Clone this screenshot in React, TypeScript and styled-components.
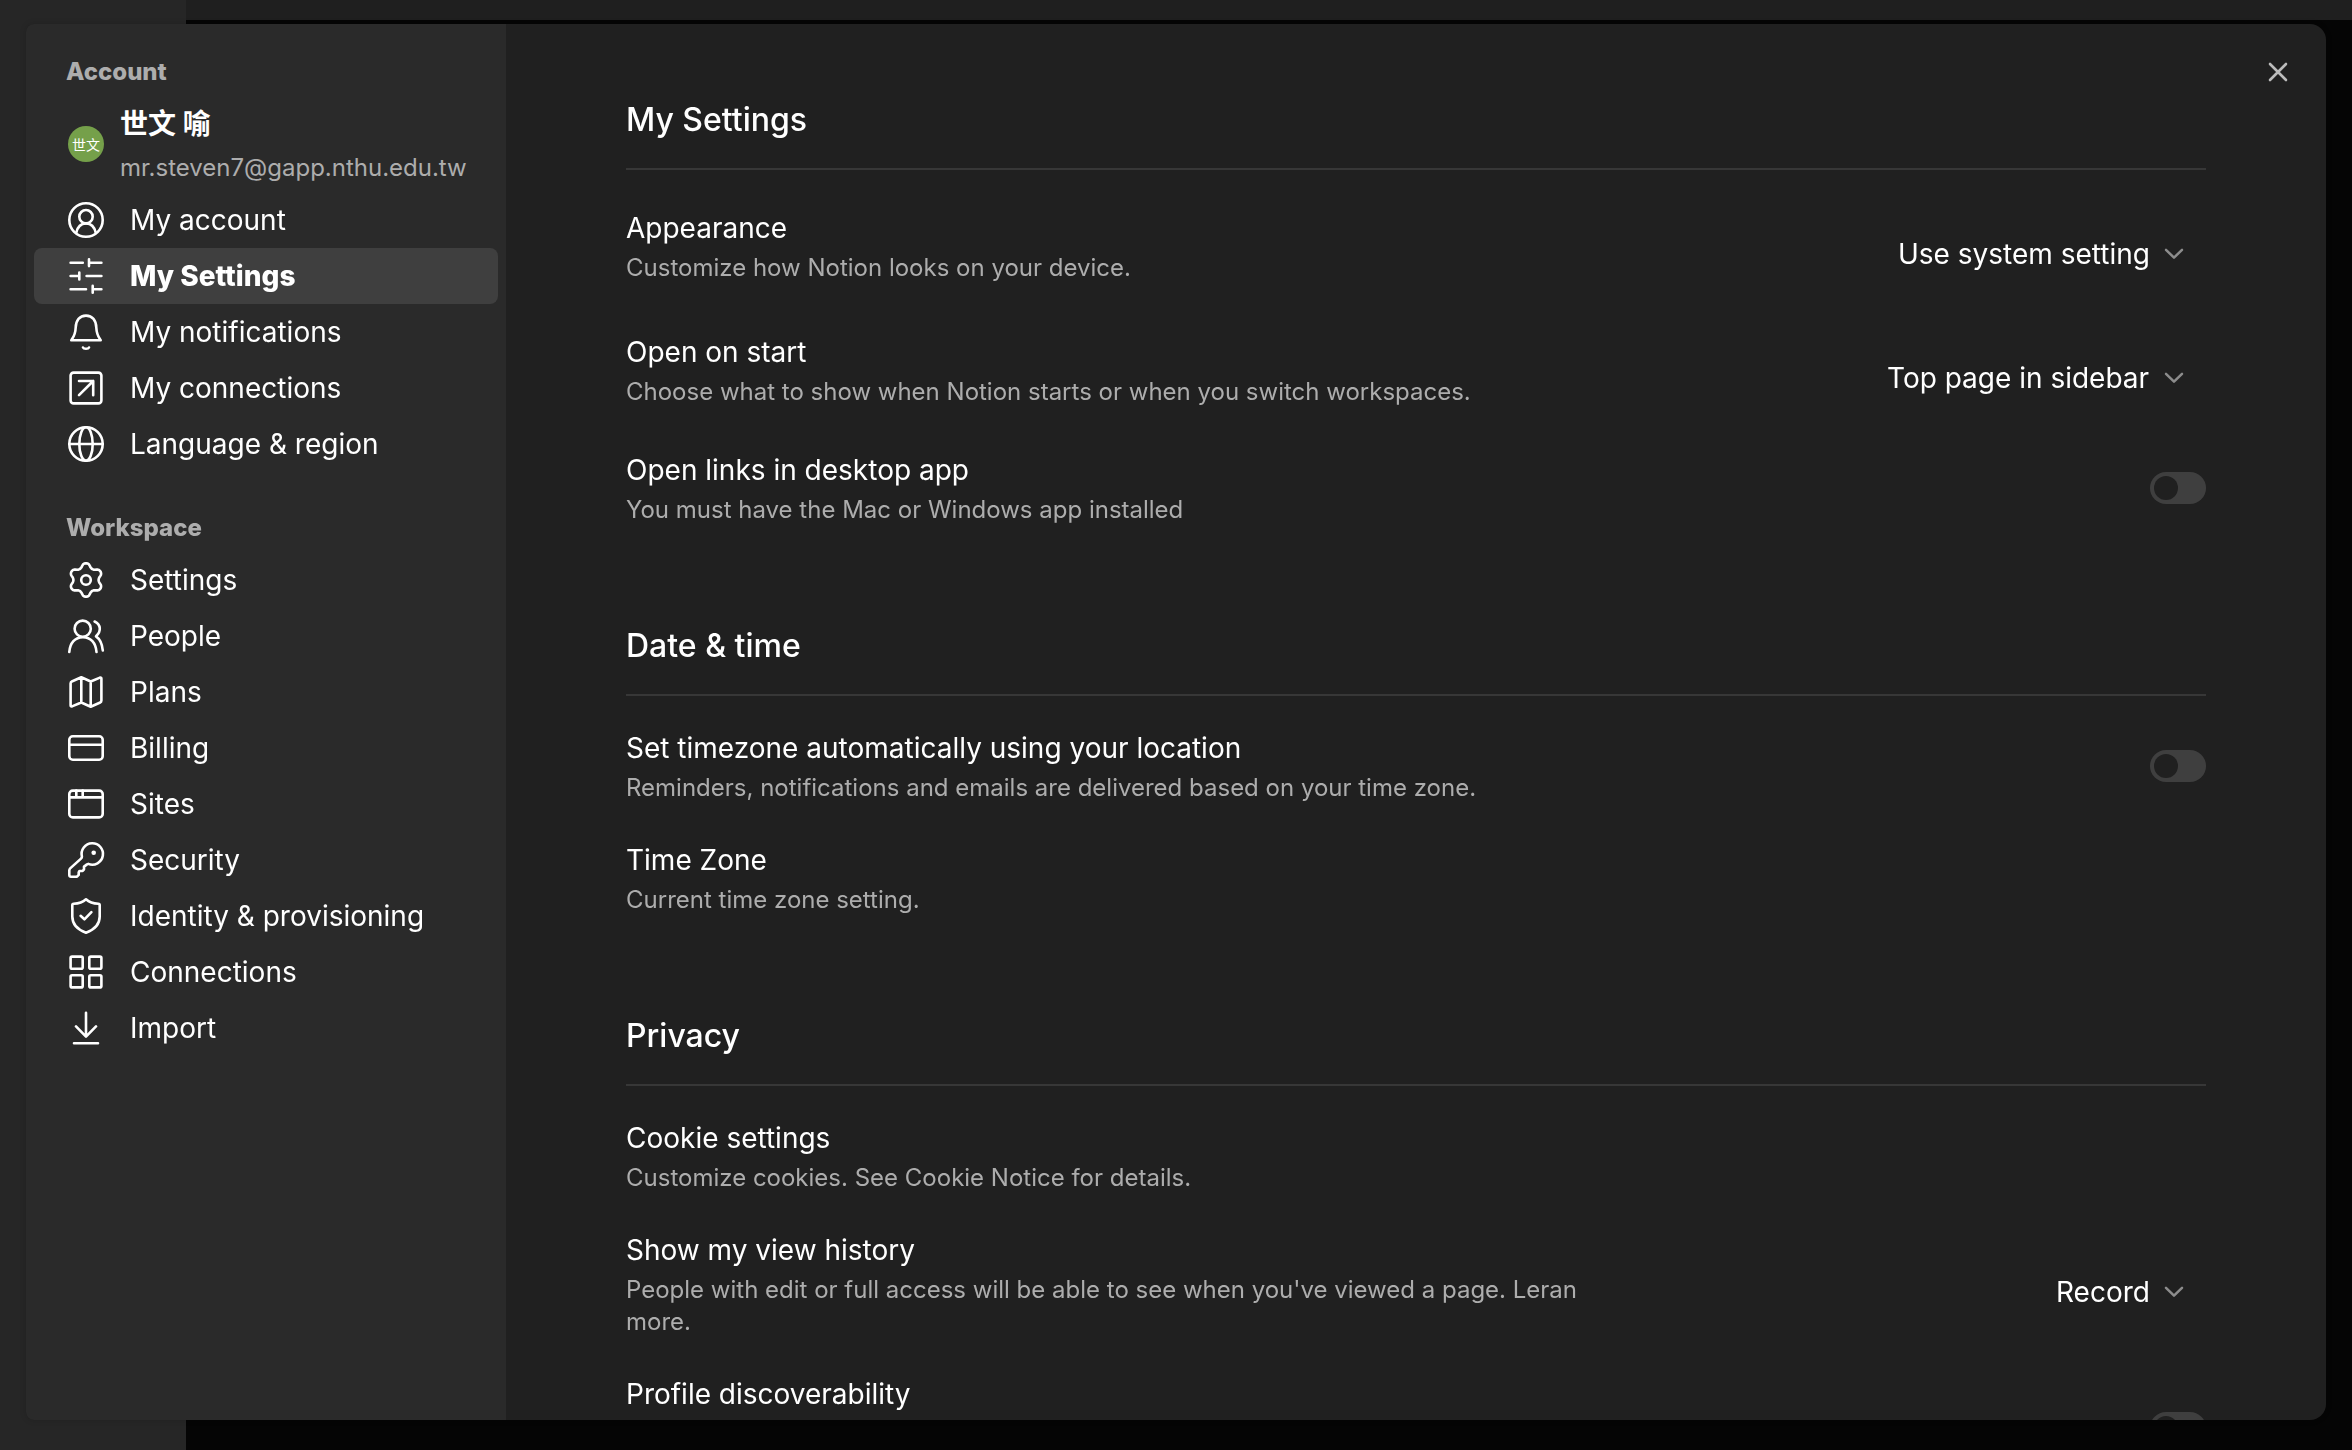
import React, { useId, useState } from "react";
import styled, { createGlobalStyle, css } from "styled-components";

const color = {
  text: "#ffffff",
  muted: "#adadad",
  sidebar: "#2a2a2a",
  panel: "#202020",
  active: "#3f3f3f",
  line: "#373737",
};

const GlobalStyle = createGlobalStyle`
  * { box-sizing: border-box; }
  body {
    margin: 0;
    background: #050505;
    color: ${color.text};
    font-family: Inter, "Noto Sans CJK TC", sans-serif;
    font-size: 28px;
  }
  h2, h3, p, ul { margin: 0; padding: 0; }
  button, select { font: inherit; color: inherit; }
`;

/* Page behind the dialog */
const Backdrop = styled.div`
  display: grid;
  grid-template-columns: 186px 1fr;
  min-height: 100vh;
`;

const BackdropRail = styled.div`
  background: #262626;
`;

const BackdropBar = styled.div`
  height: 20px;
  background: #1f1f1f;
`;

const Dialog = styled.section`
  position: fixed;
  inset: 24px 26px 30px;
  display: flex;
  overflow: hidden;
  border-radius: 8px 16px 16px 8px;
  background: ${color.panel};
  box-shadow: 0 0 6px rgba(0, 0, 0, 0.15);
`;

/* Sidebar */
const Sidebar = styled.nav`
  flex: 0 0 480px;
  display: flex;
  flex-direction: column;
  gap: 32px;
  padding: 24px 8px;
  background: ${color.sidebar};
`;

const GroupTitle = styled.h3`
  padding: 0 32px;
  font-size: 24px;
  line-height: 48px;
  font-weight: 800;
  color: ${color.muted};
`;

const User = styled.div`
  display: flex;
  align-items: center;
  gap: 16px;
  height: 96px;
  padding-left: 34px;
`;

const UserDetails = styled.div`
  padding-top: 4px;
`;

const Avatar = styled.span`
  display: grid;
  place-items: center;
  flex: none;
  width: 36px;
  height: 36px;
  border-radius: 50%;
  background: #75a04a;
  font-size: 14px;
  font-weight: 400;
`;

const UserName = styled.p`
  line-height: 44px;
  font-weight: 700;
`;

const UserMail = styled.p`
  font-size: 24px;
  line-height: 44px;
  color: ${color.muted};
`;

const NavList = styled.ul`
  list-style: none;
`;

const NavButton = styled.button<{ $active: boolean }>`
  display: flex;
  align-items: center;
  gap: 24px;
  width: 100%;
  height: 56px;
  padding: 0 32px;
  border: 0;
  border-radius: 8px;
  background: transparent;
  text-align: left;
  white-space: nowrap;
  cursor: pointer;
  ${(p) =>
    p.$active &&
    css`
      background: ${color.active};
      font-weight: 800;
    `}
`;

const IconSvg = styled.svg`
  flex: none;
  width: 40px;
  height: 40px;
  fill: none;
  stroke: currentColor;
  stroke-width: 2.6;
  stroke-linecap: round;
  stroke-linejoin: round;
`;

/* Main column */
const Content = styled.main`
  flex: 1;
  display: flex;
  flex-direction: column;
  gap: 96px;
  overflow: hidden;
  padding: 72px 120px 0;
`;

const SectionTitle = styled.h2`
  padding-bottom: 24px;
  border-bottom: 2px solid ${color.line};
  font-size: 32px;
  line-height: 48px;
  font-weight: 500;
`;

const Rows = styled.div`
  display: flex;
  flex-direction: column;
  gap: 36px;
  padding-top: 32px;
`;

const Row = styled.div<{ $tall?: boolean }>`
  display: flex;
  align-items: center;
  justify-content: space-between;
  min-height: ${(p) => (p.$tall ? "108px" : "76px")};
`;

const RowText = styled.div<{ $top?: boolean }>`
  display: flex;
  flex-direction: column;
  gap: 4px;
  max-width: 980px;
  align-self: ${(p) => (p.$top ? "flex-start" : "center")};
`;

const RowLabel = styled.label`
  font-size: 28px;
  font-weight: 400;
  line-height: 40px;
`;

const RowNote = styled.p`
  font-size: 24px;
  line-height: 32px;
  color: ${color.muted};
`;

const SelectBox = styled.div`
  display: grid;
  align-items: center;
  margin-top: 16px;
`;

const Select = styled.select`
  grid-area: 1 / 1;
  height: 72px;
  padding: 0 56px 0 16px;
  border: 0;
  border-radius: 8px;
  background: transparent;
  appearance: none;
  cursor: pointer;
`;

const Chevron = styled.svg`
  grid-area: 1 / 1;
  justify-self: end;
  width: 20px;
  height: 20px;
  margin-right: 22px;
  fill: none;
  stroke: #8c8c8c;
  stroke-width: 2.5;
  stroke-linecap: round;
  stroke-linejoin: round;
  pointer-events: none;
`;

const Switch = styled.input`
  flex: none;
  display: flex;
  align-items: center;
  width: 56px;
  height: 32px;
  margin: 0;
  padding: 4px;
  border-radius: 16px;
  background: ${color.active};
  appearance: none;
  cursor: pointer;

  &::before {
    content: "";
    width: 24px;
    height: 24px;
    border-radius: 50%;
    background: ${color.panel};
  }
  &:checked {
    justify-content: flex-end;
    background: #2383e2;
  }
`;

const CloseButton = styled.button`
  position: absolute;
  top: 28px;
  right: 28px;
  display: grid;
  place-items: center;
  width: 40px;
  height: 40px;
  padding: 0;
  border: 0;
  background: transparent;
  color: #bcbcbc;
  cursor: pointer;
`;

const gearOutline =
  Array.from({ length: 96 }, (_, i) => {
    const a = (i / 96) * Math.PI * 2;
    const wave = Math.cos(6 * a);
    const r = 14.7 + 2.1 * Math.sign(wave) * Math.pow(Math.abs(wave), 0.7);
    const x = (20 + r * Math.sin(a)).toFixed(2);
    const y = (20 - r * Math.cos(a)).toFixed(2);
    return `${i ? "L" : "M"}${x} ${y}`;
  }).join("") + "Z";

const icons: Record<string, React.ReactNode> = {
  account: (
    <>
      <circle cx="20" cy="20" r="16.7" />
      <circle cx="20" cy="16.7" r="6.7" />
      <path d="M10.2 33C11.5 27 15.2 23.4 20 23.4S28.5 27 29.8 33" />
    </>
  ),
  sliders: (
    <path d="M4.6 6.7H16.8M23 3.3V10.1M23 6.7H35.4M4.6 20H13.3M13.3 16.6V23.4M20.6 20H35.4M4.6 33.3H20M26.7 29.9V36.7M26.7 33.3H35.4" />
  ),
  bell: (
    <>
      <path d="M5.3 28.3H34.7C32.8 25.5 30.6 23 30.3 15.5C30 8.5 26.5 3.6 20 3.6S10 8.5 9.7 15.5C9.4 23 7.2 25.5 5.3 28.3Z" />
      <path d="M17 35.5C17.8 37.2 22.2 37.2 23 35.5" />
    </>
  ),
  arrowBox: (
    <>
      <rect x="4.6" y="4.6" width="30.8" height="30.8" rx="3" />
      <path d="M13 13H27.2V27.2M27.2 13L13 27.2" />
    </>
  ),
  globe: (
    <>
      <circle cx="20" cy="20" r="16.7" />
      <ellipse cx="20" cy="20" rx="6.7" ry="16.7" />
      <path d="M3.3 20H36.7" />
    </>
  ),
  gear: (
    <>
      <path d={gearOutline} />
      <circle cx="20" cy="20" r="4.8" />
    </>
  ),
  people: (
    <>
      <circle cx="16.7" cy="12.7" r="8.1" />
      <path d="M3.3 36C4 27 9 21.2 16.9 21.2S29.8 27 30.5 36" />
      <path d="M28.6 5.5C35 8.5 35.5 15.5 30 20.3C34 23 36.2 28 36.8 34.5" />
    </>
  ),
  map: (
    <path d="M4.6 11.5Q4.6 10 5.8 9.5L15.3 5.3L24.7 9.5L34 5.6Q35.4 5.2 35.4 6.8V28.5Q35.4 30 34.2 30.5L24.7 34.7L15.3 30.5L6 34.4Q4.6 34.8 4.6 33.2ZM15.3 5.3V30.5M24.7 9.5V34.7" />
  ),
  card: (
    <>
      <rect x="3.3" y="8.3" width="33.4" height="23.4" rx="3.5" />
      <path d="M3.3 16.7H36.7" />
    </>
  ),
  browser: (
    <>
      <rect x="3.3" y="6.6" width="33.4" height="26.8" rx="3.5" />
      <path d="M3.3 13.4H36.7M10.3 6.6V13.4M16.7 6.6V13.4" />
    </>
  ),
  key: (
    <>
      <path d="M15.9 16.5A10.7 10.7 0 1 1 22.3 23.9L21 24.4L18 26.6V29.3L16.6 31H13.5L12.7 32.4V34.9L11 36.7H5Q3.3 36.7 3.3 35V30.5Q3.3 29.3 4.2 28.4L15 18.6Q16 17.8 15.9 16.5Z" />
      <circle cx="27.7" cy="12.7" r="2.3" fill="currentColor" stroke="none" />
    </>
  ),
  shield: (
    <>
      <path d="M20 3.3C16.5 6.5 12 7.6 7.7 7.8Q6.3 7.9 6.3 9.2V20.5C6.3 28.5 12 33.8 20 36.7C28 33.8 33.7 28.5 33.7 20.5V9.2Q33.7 7.9 32.3 7.8C28 7.6 23.5 6.5 20 3.3Z" />
      <path d="M14.6 19.8L18.4 23.3L25.4 16.2" />
    </>
  ),
  grid: (
    <>
      <rect x="4.6" y="4.6" width="12.1" height="12.1" rx="1.5" />
      <rect x="23.3" y="4.6" width="12.1" height="12.1" rx="1.5" />
      <rect x="4.6" y="23.3" width="12.1" height="12.1" rx="1.5" />
      <rect x="23.3" y="23.3" width="12.1" height="12.1" rx="1.5" />
    </>
  ),
  download: <path d="M20 4.7V28.6M10 18.4L20 28.6L30 18.4M8 35.3H32" />,
  close: <path d="M12 12L28 28M28 12L12 28" />,
};

const Icon = ({ name }: { name: string }) => (
  <IconSvg viewBox="0 0 40 40" aria-hidden="true">
    {icons[name]}
  </IconSvg>
);

type NavItem = [icon: string, label: string];

const accountItems: NavItem[] = [
  ["account", "My account"],
  ["sliders", "My Settings"],
  ["bell", "My notifications"],
  ["arrowBox", "My connections"],
  ["globe", "Language & region"],
];

const workspaceItems: NavItem[] = [
  ["gear", "Settings"],
  ["people", "People"],
  ["map", "Plans"],
  ["card", "Billing"],
  ["browser", "Sites"],
  ["key", "Security"],
  ["shield", "Identity & provisioning"],
  ["grid", "Connections"],
  ["download", "Import"],
];

interface NavProps {
  items: NavItem[];
  current: string;
  onPick: (label: string) => void;
}

const Nav = ({ items, current, onPick }: NavProps) => (
  <NavList>
    {items.map(([icon, label]) => (
      <li key={label}>
        <NavButton
          type="button"
          $active={label === current}
          aria-current={label === current ? "page" : undefined}
          onClick={() => onPick(label)}
        >
          <Icon name={icon} />
          {label}
        </NavButton>
      </li>
    ))}
  </NavList>
);

interface SettingProps {
  label: string;
  note?: string;
  choice?: string;
  toggle?: boolean;
  tall?: boolean;
}

const Setting = ({ label, note, choice, toggle, tall }: SettingProps) => {
  const id = useId();
  return (
    <Row $tall={tall}>
      <RowText $top={tall}>
        {choice || toggle ? (
          <RowLabel htmlFor={id}>{label}</RowLabel>
        ) : (
          <RowLabel as="h3">{label}</RowLabel>
        )}
        {note && <RowNote>{note}</RowNote>}
      </RowText>
      {choice && (
        <SelectBox>
          <Select id={id} defaultValue={choice}>
            <option>{choice}</option>
          </Select>
          <Chevron viewBox="0 0 20 20" aria-hidden="true">
            <path d="M2 5.8L10 13.6L18 5.8" />
          </Chevron>
        </SelectBox>
      )}
      {toggle && <Switch id={id} type="checkbox" role="switch" />}
    </Row>
  );
};

const sections: { title: string; rows: SettingProps[] }[] = [
  {
    title: "My Settings",
    rows: [
      {
        label: "Appearance",
        note: "Customize how Notion looks on your device.",
        choice: "Use system setting",
      },
      {
        label: "Open on start",
        note: "Choose what to show when Notion starts or when you switch workspaces.",
        choice: "Top page in sidebar",
      },
      {
        label: "Open links in desktop app",
        note: "You must have the Mac or Windows app installed",
        toggle: true,
      },
    ],
  },
  {
    title: "Date & time",
    rows: [
      {
        label: "Set timezone automatically using your location",
        note: "Reminders, notifications and emails are delivered based on your time zone.",
        toggle: true,
      },
      { label: "Time Zone", note: "Current time zone setting." },
    ],
  },
  {
    title: "Privacy",
    rows: [
      { label: "Cookie settings", note: "Customize cookies. See Cookie Notice for details." },
      {
        label: "Show my view history",
        note: "People with edit or full access will be able to see when you've viewed a page. Leran more.",
        choice: "Record",
      },
      { label: "Profile discoverability", toggle: true, tall: true },
    ],
  },
];

export default function App() {
  const [current, setCurrent] = useState("My Settings");
  return (
    <>
      <GlobalStyle />
      <Backdrop>
        <BackdropRail />
        <BackdropBar />
      </Backdrop>
      <Dialog role="dialog" aria-label="Settings">
        <Sidebar>
          <div>
            <GroupTitle>Account</GroupTitle>
            <User>
              <Avatar>世文</Avatar>
              <UserDetails>
                <UserName>世文 喻</UserName>
                <UserMail>mr.steven7@gapp.nthu.edu.tw</UserMail>
              </UserDetails>
            </User>
            <Nav items={accountItems} current={current} onPick={setCurrent} />
          </div>
          <div>
            <GroupTitle>Workspace</GroupTitle>
            <Nav items={workspaceItems} current={current} onPick={setCurrent} />
          </div>
        </Sidebar>
        <Content>
          {sections.map((section) => (
            <section key={section.title}>
              <SectionTitle>{section.title}</SectionTitle>
              <Rows>
                {section.rows.map((row) => (
                  <Setting key={row.label} {...row} />
                ))}
              </Rows>
            </section>
          ))}
        </Content>
        <CloseButton type="button" aria-label="Close">
          <Icon name="close" />
        </CloseButton>
      </Dialog>
    </>
  );
}
